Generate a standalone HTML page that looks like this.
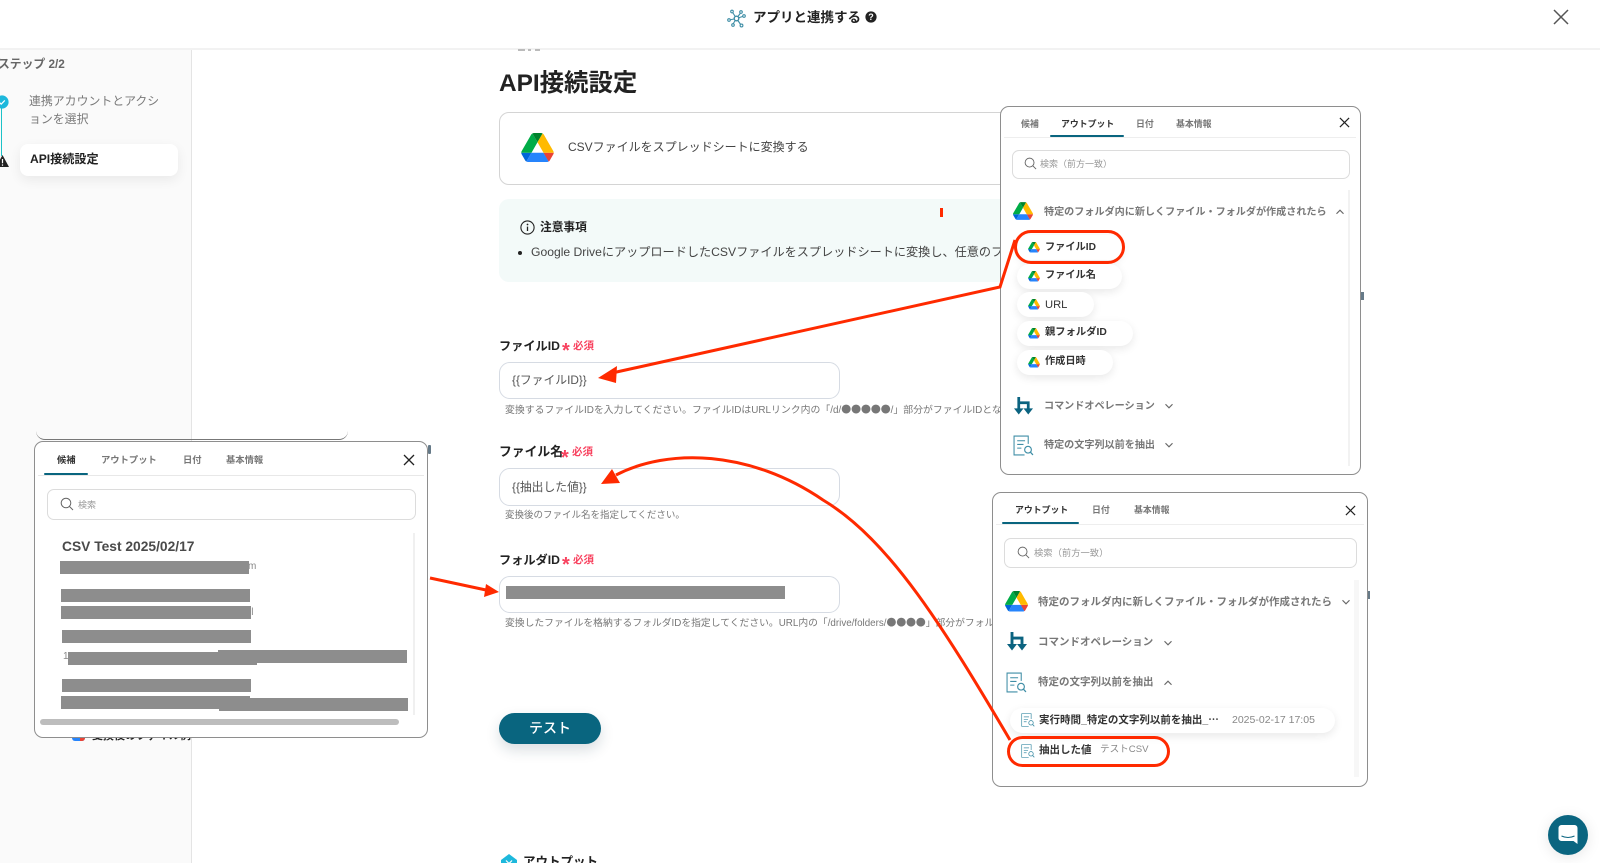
<!DOCTYPE html>
<html lang="ja"><head><meta charset="utf-8"><title>アプリと連携する</title>
<style>
html,body{margin:0;padding:0;background:#fff}
#p{position:relative;width:1600px;height:863px;overflow:hidden;background:#fff;font-family:"Liberation Sans","Noto Sans CJK JP",sans-serif;color:#222}
#p div,#p svg{position:absolute}
#p span.t,.t{position:absolute;white-space:nowrap;line-height:20px}
.cjk{font-family:"Noto Sans CJK JP",sans-serif}
.box{box-sizing:border-box;background:#fff}
.inp{box-sizing:border-box;left:499px;width:341px;border:1px solid #d6dbe3;border-radius:11px;background:#fff}
.help{font-size:9.6px;color:#777;left:505px}
.lab{font-size:12.8px;font-weight:700;left:499px;color:#222}
.req{font-size:10.5px;font-weight:700;color:#f8425f}
.ast{font-size:20px;font-weight:700;color:#f8425f}
.panel{box-sizing:border-box;background:#fff;border:1px solid #8e8e8e;border-radius:9px}
.tab{font-size:8.9px;color:#777;font-weight:700}
.tabl{font-size:9.3px}
.tabon{color:#333}
.sb{box-sizing:border-box;background:#fff;border:1px solid #dcdcdc;border-radius:7px}
.ph{font-size:9px;color:#999}
.gt{font-size:10.1px;font-weight:700;color:#777}
.chip{background:#fff;border-radius:13px;height:25px;box-shadow:0 3px 9px rgba(0,0,0,.09)}
.ct{font-size:10.5px;font-weight:700;color:#333}
.bar{background:#8d8d8d}
.red{fill:none;stroke:#ff2a00;stroke-width:3}
</style></head><body>
<div id="p">
<svg width="0" height="0" style="position:absolute">
<defs>
<symbol id="drive" viewBox="0 0 87.3 78">
<path d="m6.6 66.85 3.85 6.65c.8 1.4 1.95 2.5 3.3 3.3l13.75-23.8h-27.5c0 1.55.4 3.1 1.2 4.5z" fill="#0066da"/>
<path d="m43.65 25-13.75-23.8c-1.35.8-2.5 1.9-3.3 3.3l-25.4 44a9.06 9.06 0 0 0 -1.2 4.5h27.5z" fill="#00ac47"/>
<path d="m73.55 76.8c1.35-.8 2.5-1.9 3.3-3.3l1.6-2.75 7.65-13.25c.8-1.4 1.2-2.95 1.2-4.5h-27.502l5.852 11.5z" fill="#ea4335"/>
<path d="m43.65 25 13.75-23.8c-1.35-.8-2.9-1.2-4.5-1.2h-18.5c-1.6 0-3.15.45-4.5 1.2z" fill="#00832d"/>
<path d="m59.8 53h-32.3l-13.75 23.8c1.35.8 2.9 1.2 4.5 1.2h50.8c1.6 0 3.15-.45 4.5-1.2z" fill="#2684fc"/>
<path d="m73.4 26.5-12.7-22c-.8-1.4-1.95-2.5-3.3-3.3l-13.75 23.8 16.15 28h27.45c0-1.55-.4-3.1-1.2-4.5z" fill="#ffba00"/>
</symbol>
<symbol id="doc" viewBox="0 0 20 20">
<path d="M14.5 8.5V1H1v18h10M4 5.5h7.5M4 9h6M4 12.5h4" fill="none" stroke="#3f8ea6" stroke-width="1"/>
<circle cx="14.3" cy="14" r="3.2" fill="none" stroke="#3f8ea6" stroke-width="1.1"/>
<path d="M16.6 16.4l2.4 2.6" stroke="#3f8ea6" stroke-width="1.2"/>
</symbol>
<symbol id="cmd" viewBox="0 0 18 18">
<path d="M4.5 0v12M4.5 5.5h9V12" fill="none" stroke="#0b6380" stroke-width="2.6"/>
<path d="M0 10.8h9L4.5 16.6zM9 10.8h9l-4.5 5.8z" fill="#0b6380"/>
</symbol>
<symbol id="dn" viewBox="0 0 10 10"><path d="M1.5 3.2L5 6.8l3.5-3.6" fill="none" stroke="#666" stroke-width="1.1"/></symbol>
<symbol id="up" viewBox="0 0 10 10"><path d="M1.5 6.8L5 3.2l3.5 3.6" fill="none" stroke="#666" stroke-width="1.1"/></symbol>
<symbol id="mag" viewBox="0 0 14 14"><circle cx="6" cy="6" r="4.8" fill="none" stroke="#666" stroke-width="1"/><path d="M9.5 9.5l3.5 3.5" stroke="#666" stroke-width="1"/></symbol>
<symbol id="x" viewBox="0 0 12 12"><path d="M1 1l10 10M11 1L1 11" stroke="#222" stroke-width="1.3"/></symbol>
</defs></svg>

<!-- sidebar -->
<div style="left:0;top:49px;width:191px;height:814px;background:#fafafa;border-right:1px solid #e4e4e4"></div>
<!-- header -->
<div style="left:0;top:0;width:1600px;height:50px;background:#fff;border-bottom:2px solid #f2f2f2;box-sizing:border-box"></div>
<div style="left:518px;top:49px;width:7px;height:2px;background:#bbb"></div>
<div style="left:528px;top:49px;width:3px;height:2px;background:#bbb"></div>
<div style="left:535px;top:49px;width:5px;height:2px;background:#bbb"></div>
<svg style="left:727px;top:9px" width="19" height="19" viewBox="0 0 19 19" fill="none" stroke="#3f8ea6" stroke-width="1.1">
<path d="M9.500 9.500L5 2.500M9.500 9.500L13.500 4M9.500 9.500L17 7M9.500 9.500L2 11M9.500 9.500L14 16M9.500 9.500L6 15"/>
<circle cx="9.500" cy="9.500" r="2.300" fill="#fff" stroke-width="1.400"/><circle cx="5" cy="2.500" r="1.300" fill="#fff"/><circle cx="14" cy="3" r="1.300" fill="#fff"/><circle cx="17" cy="7" r="1.300" fill="#fff"/><circle cx="2" cy="11" r="1.300" fill="#fff"/><circle cx="14.500" cy="16.500" r="1.400" fill="#fff"/><circle cx="6" cy="16" r="1.300" fill="#fff"/>
</svg>
<span class="t" style="left:753px;top:8px;font-size:13.5px;font-weight:700;color:#222">アプリと連携する</span>
<svg style="left:865px;top:11px" width="12" height="12" viewBox="0 0 12 12"><circle cx="6" cy="6" r="5.600" fill="#222"/><text x="6" y="9.200" text-anchor="middle" font-size="9" font-weight="700" fill="#fff" font-family="Liberation Sans">?</text></svg>
<svg style="left:1553px;top:9px" width="16" height="16" viewBox="0 0 16 16"><path d="M1 1l14 14M15 1L1 15" stroke="#555" stroke-width="1.500"/></svg>

<span class="t" style="left:-2px;top:54px;font-size:11.8px;font-weight:700;color:#666">ステップ 2/2</span>
<div style="left:1px;top:104px;width:1px;height:52px;background:#1cc2c8"></div>
<svg style="left:-5px;top:95px" width="14" height="14" viewBox="0 0 14 14"><circle cx="7" cy="7" r="6.600" fill="#1db8dc"/><path d="M4.200 7.200l2 2 3.600-3.800" fill="none" stroke="#fff" stroke-width="1.200"/></svg>
<svg style="left:-4px;top:155px" width="13" height="12" viewBox="0 0 13 12"><path d="M6.500 0L13 12H0z" fill="#222"/><path d="M6.500 4v4.200M6.500 9.400v1.300" stroke="#fff" stroke-width="1.200"/></svg>
<span class="t" style="left:29px;top:91px;font-size:11.9px;color:#7a7a7a">連携アカウントとアクシ</span>
<span class="t" style="left:29px;top:109px;font-size:11.9px;color:#7a7a7a">ョンを選択</span>
<div style="left:20px;top:144px;width:158px;height:32px;background:#fff;border-radius:8px;box-shadow:0 4px 12px rgba(0,0,0,.07)"></div>
<span class="t" style="left:30px;top:149px;font-size:12.1px;font-weight:700;color:#222">API接続設定</span>

<!-- main -->
<span class="t" style="left:499px;top:74px;font-size:24.4px;font-weight:700;color:#222">API接続設定</span>
<div class="box" style="left:499px;top:112px;width:790px;height:73px;border:1px solid #d4d4d4;border-radius:10px"></div>
<svg style="left:521px;top:133px" width="33" height="29"><use href="#drive"/></svg>
<span class="t" style="left:568px;top:137px;font-size:12px;color:#444">CSVファイルをスプレッドシートに変換する</span>

<div style="left:499px;top:199px;width:790px;height:83px;background:#f3faf9;border-radius:10px"></div>
<svg style="left:520px;top:220px" width="15" height="15" viewBox="0 0 15 15"><circle cx="7.500" cy="7.500" r="6.600" fill="none" stroke="#222" stroke-width="1.100"/><path d="M7.500 6.600v4.400" stroke="#222" stroke-width="1.300"/><circle cx="7.500" cy="4.500" r=".9" fill="#222"/></svg>
<span class="t" style="left:540px;top:218px;font-size:11.7px;font-weight:700;color:#222">注意事項</span>
<div style="left:518px;top:251px;width:4px;height:4px;background:#222;border-radius:50%"></div>
<span class="t" style="left:531px;top:242px;font-size:12.15px;color:#444">Google DriveにアップロードしたCSVファイルをスプレッドシートに変換し、任意のフォルダに格納します。</span>
<div style="left:940px;top:208px;width:3px;height:9px;background:#ff2a00"></div>

<span class="t lab" style="top:336px;font-size:12.2px">ファイルID</span>
<span class="t ast" style="left:562px;top:341px">*</span><span class="t req" style="left:573px;top:336px">必須</span>
<div class="inp" style="top:362px;height:37px"></div>
<span class="t" style="left:512px;top:370px;font-size:11.8px;color:#555">{{ファイルID}}</span>
<span class="t help" style="top:399px;font-size:9.9px">変換するファイルIDを入力してください。ファイルIDはURLリンク内の「/d/<span class="cjk">●●●●●</span>/」部分がファイルIDとなります。</span>

<span class="t lab" style="top:442px">ファイル名</span>
<span class="t ast" style="left:561px;top:448px">*</span><span class="t req" style="left:572px;top:442px">必須</span>
<div class="inp" style="top:468px;height:38px"></div>
<span class="t" style="left:512px;top:477px;font-size:11.8px;color:#555">{{抽出した値}}</span>
<span class="t help" style="top:506px;font-size:9.5px">変換後のファイル名を指定してください。</span>

<span class="t lab" style="top:550px;font-size:12.2px">フォルダID</span>
<span class="t ast" style="left:562px;top:555px">*</span><span class="t req" style="left:573px;top:550px">必須</span>
<div class="inp" style="top:576px;height:37px"></div>
<div class="bar" style="left:506px;top:586px;width:279px;height:13px"></div>
<span class="t help" style="top:612px;font-size:9.8px">変換したファイルを格納するフォルダIDを指定してください。URL内の「/drive/folders/<span class="cjk">●●●●</span>」部分がフォルダIDとなります。</span>

<div style="left:499px;top:713px;width:102px;height:31px;background:#09657f;border-radius:16px;box-shadow:0 6px 14px rgba(20,50,70,.16)"></div>
<span class="t" style="left:499px;top:718px;width:102px;text-align:center;font-size:14px;font-weight:500;color:#fff">テスト</span>

<svg style="left:500px;top:854px" width="18" height="18" viewBox="0 0 18 18"><path d="M9 0l8 6v12H1V6z" fill="#1db8dc"/><path d="M6 6.500l6 6M12 6.500l-6 6" stroke="#fff" stroke-width="1.200"/></svg>
<span class="t" style="left:523px;top:852px;font-size:12.5px;font-weight:700;color:#222">アウトプット</span>

<!-- background bits behind left panel -->
<div style="left:36px;top:420px;width:312px;height:20px;border-bottom:1px solid #777;border-radius:0 0 9px 9px;box-sizing:border-box"></div>
<svg style="left:71px;top:728px" width="15" height="14" viewBox="0 0 15 14"><rect x="1" y="1" width="13" height="12" rx="3" fill="#2684fc"/><path d="M9 8h5v2a3 3 0 0 1-3 3H9z" fill="#ea4335"/></svg>
<span class="t" style="left:92px;top:726px;font-size:11px;font-weight:700;color:#222">変換後のファイル例</span>
<div style="left:428px;top:445px;width:3px;height:9px;background:#667a88;border-radius:1px"></div>
<div style="left:1361px;top:292px;width:3px;height:8px;background:#667a88"></div>
<div style="left:1367px;top:591px;width:3px;height:8px;background:#667a88"></div>

<!-- left panel -->
<div class="panel" style="left:34px;top:441px;width:394px;height:297px"></div>
<div style="left:38px;top:475px;width:386px;height:1px;background:#e8e8e8"></div>
<div style="left:44px;top:473px;width:44px;height:2px;background:#09657f;border-radius:1px"></div>
<span class="t tab tabl tabon" style="left:57px;top:450px">候補</span>
<span class="t tab tabl" style="left:101px;top:450px">アウトプット</span>
<span class="t tab tabl" style="left:183px;top:450px">日付</span>
<span class="t tab tabl" style="left:226px;top:450px">基本情報</span>
<svg style="left:403px;top:454px" width="12" height="12"><use href="#x"/></svg>
<div class="sb" style="left:47px;top:489px;width:369px;height:31px"></div>
<svg style="left:60px;top:497px" width="14" height="14"><use href="#mag"/></svg>
<span class="t ph" style="left:78px;top:495px">検索</span>
<div style="left:413px;top:533px;width:2px;height:182px;background:#f0f0f0"></div>
<span class="t" style="left:62px;top:537px;font-size:13.8px;font-weight:700;color:#4a4a4a">CSV Test 2025/02/17</span>
<span class="t" style="left:248px;top:557px;font-size:10px;color:#888">m</span>
<span class="t" style="left:249px;top:603px;font-size:10px;color:#888">jl</span>
<span class="t" style="left:63px;top:647px;font-size:10px;color:#888">1</span>
<div class="bar" style="left:60px;top:561px;width:189px;height:13px"></div>
<div class="bar" style="left:61px;top:589px;width:189px;height:13px"></div>
<div class="bar" style="left:61px;top:606px;width:190px;height:13px"></div>
<div class="bar" style="left:62px;top:630px;width:189px;height:13px"></div>
<div class="bar" style="left:68px;top:652px;width:189px;height:13px"></div>
<div class="bar" style="left:218px;top:650px;width:189px;height:13px"></div>
<div class="bar" style="left:62px;top:679px;width:189px;height:13px"></div>
<div class="bar" style="left:61px;top:696px;width:189px;height:13px"></div>
<div class="bar" style="left:219px;top:698px;width:189px;height:13px"></div>
<div style="left:40px;top:719px;width:359px;height:6px;background:#bdbdbd;border-radius:3px"></div>

<!-- top right panel -->
<div class="panel" style="left:1000px;top:106px;width:361px;height:369px"></div>
<div style="left:1004px;top:137px;width:352px;height:1px;background:#eee"></div>
<div style="left:1050px;top:135px;width:74px;height:2px;background:#09657f;border-radius:1px"></div>
<span class="t tab" style="left:1021px;top:114px">候補</span>
<span class="t tab tabon" style="left:1061px;top:114px">アウトプット</span>
<span class="t tab" style="left:1136px;top:114px">日付</span>
<span class="t tab" style="left:1176px;top:114px">基本情報</span>
<svg style="left:1339px;top:117px" width="11" height="11"><use href="#x"/></svg>
<div class="sb" style="left:1012px;top:150px;width:338px;height:29px"></div>
<svg style="left:1024px;top:157px" width="13" height="13"><use href="#mag"/></svg>
<span class="t ph" style="left:1040px;top:154px">検索（前方一致）</span>
<div style="left:1348px;top:190px;width:2px;height:276px;background:#f2f2f2"></div>
<svg style="left:1013px;top:202px" width="20" height="18"><use href="#drive"/></svg>
<span class="t gt" style="left:1044px;top:203px;font-size:10.1px">特定のフォルダ内に新しくファイル・フォルダが作成されたら</span>
<svg style="left:1335px;top:207px" width="10" height="10"><use href="#up"/></svg>

<div class="chip" style="left:1017px;top:235px;width:105px"></div>
<div class="chip" style="left:1017px;top:264px;width:105px"></div>
<div class="chip" style="left:1017px;top:292px;width:77px"></div>
<div class="chip" style="left:1017px;top:321px;width:116px"></div>
<div class="chip" style="left:1017px;top:350px;width:96px"></div>
<svg style="left:1028px;top:242px" width="12" height="10.500"><use href="#drive"/></svg>
<svg style="left:1028px;top:271px" width="12" height="10.500"><use href="#drive"/></svg>
<svg style="left:1028px;top:299px" width="12" height="10.500"><use href="#drive"/></svg>
<svg style="left:1028px;top:328px" width="12" height="10.500"><use href="#drive"/></svg>
<svg style="left:1028px;top:357px" width="12" height="10.500"><use href="#drive"/></svg>
<span class="t ct" style="left:1045px;top:238px;font-size:10.2px">ファイルID</span>
<span class="t ct" style="left:1045px;top:266px;font-size:10.2px">ファイル名</span>
<span class="t ct" style="left:1045px;top:295px;font-size:11.2px;font-weight:400">URL</span>
<span class="t ct" style="left:1045px;top:323px;font-size:10.3px">親フォルダID</span>
<span class="t ct" style="left:1045px;top:352px;font-size:10.2px">作成日時</span>

<svg style="left:1014px;top:397px" width="19" height="19"><use href="#cmd"/></svg>
<span class="t gt" style="left:1044px;top:397px">コマンドオペレーション</span>
<svg style="left:1164px;top:401px" width="10" height="10"><use href="#dn"/></svg>
<svg style="left:1013px;top:435px" width="21" height="21"><use href="#doc"/></svg>
<span class="t gt" style="left:1044px;top:436px">特定の文字列以前を抽出</span>
<svg style="left:1164px;top:440px" width="10" height="10"><use href="#dn"/></svg>

<!-- bottom right panel -->
<div class="panel" style="left:992px;top:492px;width:376px;height:295px"></div>
<div style="left:996px;top:524px;width:368px;height:1px;background:#eee"></div>
<div style="left:1002px;top:522px;width:77px;height:2px;background:#09657f;border-radius:1px"></div>
<span class="t tab tabon" style="left:1015px;top:500px">アウトプット</span>
<span class="t tab" style="left:1092px;top:500px">日付</span>
<span class="t tab" style="left:1134px;top:500px">基本情報</span>
<svg style="left:1345px;top:505px" width="11" height="11"><use href="#x"/></svg>
<div class="sb" style="left:1004px;top:538px;width:353px;height:30px"></div>
<svg style="left:1017px;top:546px" width="13" height="13"><use href="#mag"/></svg>
<span class="t ph" style="left:1034px;top:543px;font-size:9.3px">検索（前方一致）</span>
<div style="left:1354px;top:580px;width:5px;height:197px;background:#f7f7f7"></div>
<svg style="left:1005px;top:591px" width="23" height="20.500"><use href="#drive"/></svg>
<span class="t gt" style="left:1038px;top:592px;font-size:10.5px">特定のフォルダ内に新しくファイル・フォルダが作成されたら</span>
<svg style="left:1341px;top:597px" width="10" height="10"><use href="#dn"/></svg>
<svg style="left:1007px;top:632px" width="20" height="20"><use href="#cmd"/></svg>
<span class="t gt" style="left:1038px;top:632px;font-size:10.5px">コマンドオペレーション</span>
<svg style="left:1163px;top:638px" width="10" height="10"><use href="#dn"/></svg>
<svg style="left:1006px;top:672px" width="21" height="21"><use href="#doc"/></svg>
<span class="t gt" style="left:1038px;top:672px;font-size:10.5px">特定の文字列以前を抽出</span>
<svg style="left:1163px;top:678px" width="10" height="10"><use href="#up"/></svg>
<div class="chip" style="left:1010px;top:708px;width:325px"></div>
<svg style="left:1021px;top:713px" width="14" height="14"><use href="#doc"/></svg>
<span class="t ct" style="left:1039px;top:710px">実行時間_特定の文字列以前を抽出_<span class="cjk">…</span></span>
<span class="t" style="left:1232px;top:710px;font-size:10.5px;color:#888">2025-02-17 17:05</span>
<svg style="left:1021px;top:744px" width="14" height="14"><use href="#doc"/></svg>
<span class="t ct" style="left:1039px;top:740px">抽出した値</span>
<span class="t" style="left:1100px;top:740px;font-size:9.6px;color:#888">テストCSV</span>

<!-- chat -->
<div style="left:1548px;top:815px;width:40px;height:40px;border-radius:50%;background:#0a6580;box-shadow:0 2px 14px rgba(0,0,0,.1)"></div>
<svg style="left:1558px;top:825px" width="20" height="20" viewBox="0 0 20 20"><path d="M3 0h13a3 3 0 0 1 3 3v16l-4-3H3a3 3 0 0 1-3-3V3a3 3 0 0 1 3-3z" fill="#fff" transform="translate(0.5 0)"/><path d="M3.500 11q6.500 3 13 0" fill="none" stroke="#0a6580" stroke-width="1"/></svg>

<!-- annotations -->
<svg style="left:0;top:0" width="1600" height="863" viewBox="0 0 1600 863">
<rect class="red" x="1015.500" y="231.500" width="108" height="31" rx="15.500"/>
<path class="red" d="M1015 240L1000 287L612 373"/>
<path d="M598 378L617 366L616 383z" fill="#ff2a00"/>
<rect class="red" x="1008.500" y="737.500" width="160" height="28" rx="14"/>
<path class="red" d="M1010 740C945 630 890 540 823 500C750 450 668 448 616 475"/>
<path d="M601 484L612 469L620 483z" fill="#ff2a00"/>
<path class="red" d="M430 578L486 590"/>
<path d="M499 592L484 597L486 584z" fill="#ff2a00"/>
</svg>
</div>
</body></html>
